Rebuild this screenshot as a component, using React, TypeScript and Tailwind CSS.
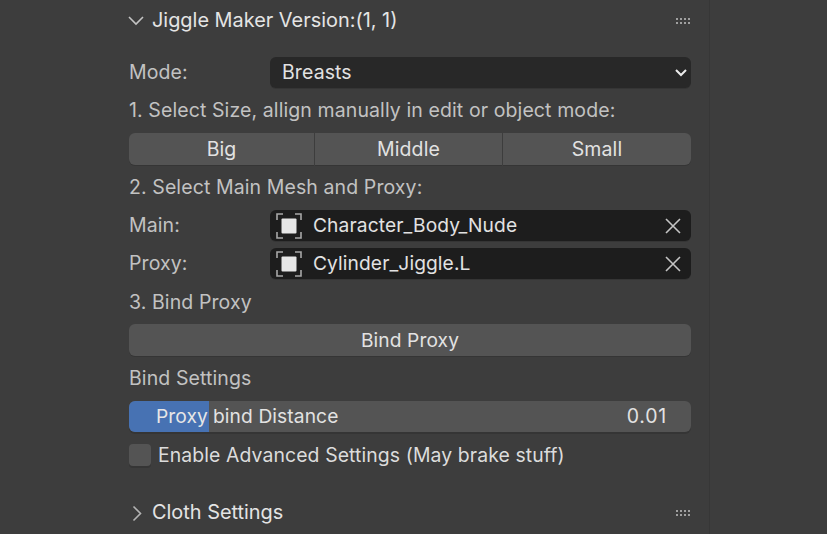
const GripDots = () => (
  <div className="grid grid-cols-[repeat(4,2px)] gap-x-[2px] gap-y-[2px]">
    {Array(8)
      .fill(0)
      .map((_, i) => (
        <span key={i} className="w-[2px] h-[2px] bg-[#a0a0a0]" />
      ))}
  </div>
);

const ObjectIcon = () => (
  <svg width="28" height="28" viewBox="0 0 28 28" fill="none" className="shrink-0">
    <path d="M2 8V2H8M20 2H26V8M2 20V26H8M20 26H26V20" stroke="#a8a8a8" strokeWidth="1.6" />
    <rect x="6.5" y="6.5" width="15" height="15" rx="1" fill="#e6e6e6" />
  </svg>
);

function PanelHeader({ open, title }: { open: boolean; title: string }) {
  return (
    <div className="h-[41px] flex items-center">
      <div className="w-[23px] shrink-0 -ml-[1px] mr-[1px]">
        {open ? (
          <svg width="16" height="10" viewBox="0 0 16 10" fill="none">
            <path d="M1 1L8 8L15 1" stroke="#c4c4c4" strokeWidth="1.6" />
          </svg>
        ) : (
          <svg width="10" height="17" viewBox="0 0 10 17" fill="none" className="ml-[4px]">
            <path d="M1.5 1.5L8.5 8.5L1.5 15.5" stroke="#b4b4b4" strokeWidth="1.6" />
          </svg>
        )}
      </div>
      <span className="text-[19.9px] tracking-normal text-[#e4e4e4]">{title}</span>
      <div className="ml-auto mr-[1px]">
        <GripDots />
      </div>
    </div>
  );
}

function Row({ children }: { children: React.ReactNode }) {
  return <div className="h-[38.25px] flex items-center">{children}</div>;
}

function Label({ children }: { children: React.ReactNode }) {
  return <span className="text-[#c2c2c2]">{children}</span>;
}

function ObjectField({ label, value }: { label: string; value: string }) {
  return (
    <Row>
      <div className="w-[141px] shrink-0">
        <Label>{label}</Label>
      </div>
      <div className="flex-1 h-[31px] rounded-[6px] bg-[#1d1d1d] flex items-center pl-[5px] pr-[9px] gap-[10px] shadow-[0_1px_0_#353535]">
        <ObjectIcon />
        <span className="text-[19.2px] text-[#e2e2e2] flex-1">{value}</span>
        <svg width="18" height="18" viewBox="0 0 18 18" fill="none">
          <path d="M2 2L16 16M16 2L2 16" stroke="#c4c4c4" strokeWidth="1.6" />
        </svg>
      </div>
    </Row>
  );
}

export default function App() {
  return (
    <div
      className="w-[827px] h-[534px] overflow-hidden bg-[#3d3d3d] pl-[129px] text-[19.5px] tracking-[0.1px]"
      style={{ fontFamily: '"Inter", "Liberation Sans", sans-serif' }}
    >
      <div className="w-[581px] border-r border-[#373737] pr-[18px] h-full">
        <PanelHeader open title="Jiggle Maker Version:(1, 1)" />
        <div className="pt-[12.5px] flex flex-col">
          <Row>
            <div className="w-[141px] shrink-0">
              <Label>Mode:</Label>
            </div>
            <div className="flex-1 h-[31px] rounded-[6px] bg-[#282828] flex items-center justify-between pl-[12px] pr-[3px] shadow-[0_1px_0_#353535]">
              <span className="text-[#e2e2e2]">Breasts</span>
              <svg width="14" height="10" viewBox="0 0 14 10" fill="none">
                <path d="M2 2L7 7L12 2" stroke="#ececec" strokeWidth="2" />
              </svg>
            </div>
          </Row>
          <Row>
            <Label>1. Select Size, allign manually in edit or object mode:</Label>
          </Row>
          <Row>
            <div className="flex-1 grid grid-cols-[185fr_187fr_188fr] gap-px h-[32px]">
              {["Big", "Middle", "Small"].map((name, index) => (
                <div
                  key={name}
                  className={`bg-[#545454] flex items-center justify-center text-[#e2e2e2] shadow-[0_1px_0_#353535] ${
                    index === 0 ? "rounded-l-[6px]" : index === 2 ? "rounded-r-[6px]" : ""
                  }`}
                >
                  {name}
                </div>
              ))}
            </div>
          </Row>
          <Row>
            <Label>2. Select Main Mesh and Proxy:</Label>
          </Row>
          <ObjectField label="Main:" value="Character_Body_Nude" />
          <ObjectField label="Proxy:" value="Cylinder_Jiggle.L" />
          <Row>
            <Label>3. Bind Proxy</Label>
          </Row>
          <Row>
            <div className="flex-1 h-[32px] rounded-[6px] bg-[#545454] flex items-center justify-center text-[19.2px] text-[#e2e2e2] shadow-[0_1px_0_#353535]">
              Bind Proxy
            </div>
          </Row>
          <Row>
            <Label>Bind Settings</Label>
          </Row>
          <Row>
            <div className="flex-1 h-[31px] rounded-[6px] bg-[#545454] flex items-center overflow-hidden shadow-[0_2px_0_#353535]">
              <div className="w-[80px] h-full bg-[#4772b3] shrink-0 flex items-center pl-[27px] text-[19.2px] text-[#e6e6e6] whitespace-nowrap">
                Proxy
              </div>
              <span className="pl-[4px] text-[19.2px] text-[#e2e2e2]">bind Distance</span>
              <span className="ml-auto pr-[24px] tracking-[0.8px] text-[#e2e2e2]">0.01</span>
            </div>
          </Row>
          <Row>
            <div className="w-[22px] h-[22px] rounded-[4px] bg-[#545454] shadow-[0_2px_0_#353535] mr-[7px]" />
            <span className="text-[19.4px] text-[#dcdcdc]">Enable Advanced Settings (May brake stuff)</span>
          </Row>
        </div>
        <div className="mt-[18.5px]">
          <PanelHeader open={false} title="Cloth Settings" />
        </div>
      </div>
    </div>
  );
}
